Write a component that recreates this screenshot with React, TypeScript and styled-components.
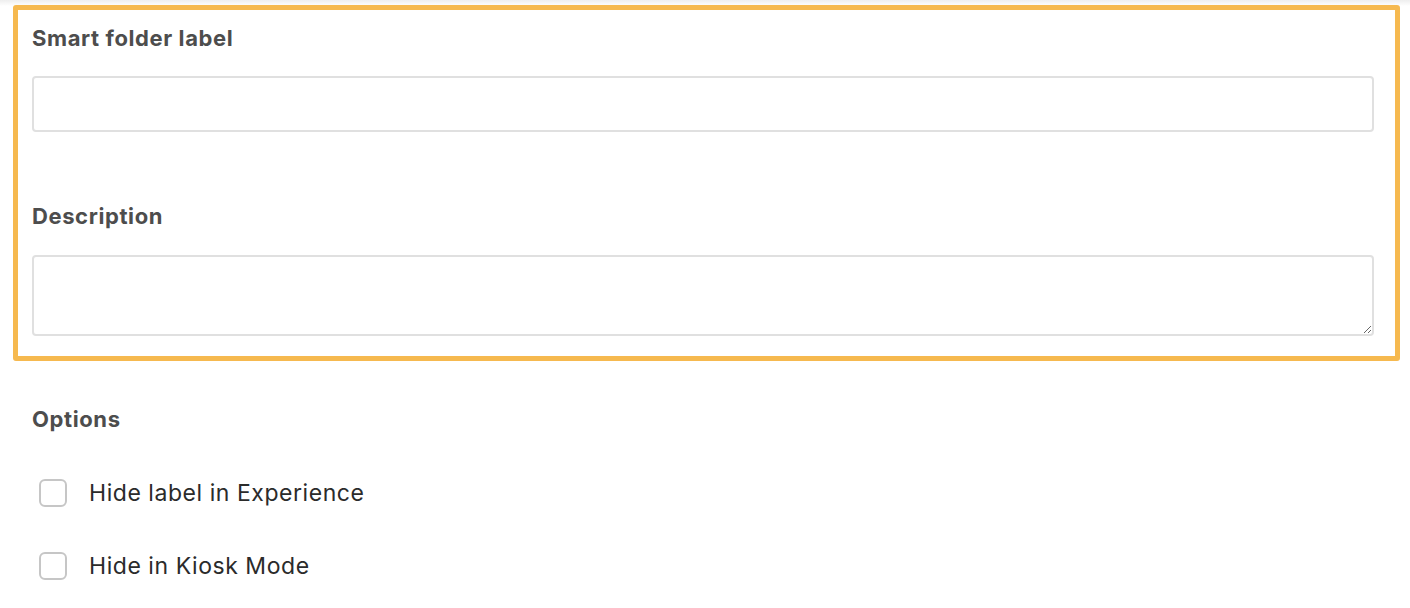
import React from "react";
import styled, { createGlobalStyle } from "styled-components";

const GlobalStyle = createGlobalStyle`
  html, body {
    margin: 0;
    padding: 0;
    background: linear-gradient(#eeeeee 0px, #ffffff 6px) no-repeat #ffffff;
    font-family: Inter, "Noto Sans", "Liberation Sans", sans-serif;
  }
`;

const Page = styled.div`
  width: 1410px;
  height: 608px;
  overflow: hidden;
  padding-top: 5px;
  box-sizing: border-box;
`;

const Highlight = styled.section`
  margin: 0 10px 0 13px;
  border: 5px solid #f6b94f;
  border-radius: 3px;
  padding: 14px 21px 20px 14px;
  display: flex;
  flex-direction: column;
`;

const FieldLabel = styled.label<{ $gap: number }>`
  display: block;
  font-size: 22px;
  line-height: 28px;
  font-weight: 700;
  color: #4d4d4d;
  letter-spacing: 0.6px;
  margin-bottom: ${({ $gap }) => $gap}px;
`;

const TextInput = styled.input`
  display: block;
  box-sizing: border-box;
  width: 100%;
  height: 56px;
  border: 2px solid #e0e0e0;
  border-radius: 4px;
  background: #fff;
  outline: none;
  font: inherit;
  margin-bottom: 70px;
`;

const TextArea = styled.textarea`
  display: block;
  box-sizing: border-box;
  width: 100%;
  height: 81px;
  border: 2px solid #e0e0e0;
  border-radius: 4px;
  background: #fff;
  outline: none;
  resize: vertical;
  font: inherit;
  margin: 0;
`;

const Options = styled.div`
  padding: 44px 0 0 32px;
  display: flex;
  flex-direction: column;
`;

const OptionList = styled.div`
  display: flex;
  flex-direction: column;
  gap: 45px;
  padding-left: 7px;
`;

const OptionRow = styled.label`
  display: flex;
  align-items: center;
  gap: 22px;
  height: 28px;
  cursor: pointer;
`;

const Box = styled.span`
  width: 28px;
  height: 28px;
  box-sizing: border-box;
  border: 2px solid #c6c6c6;
  border-radius: 6px;
  background: #fff;
  flex: none;
`;

const OptionText = styled.span`
  font-size: 23px;
  color: #2b2b2b;
  letter-spacing: 0.55px;
`;

const options = ["Hide label in Experience", "Hide in Kiosk Mode"];

export default function App() {
  return (
    <Page>
      <GlobalStyle />
      <Highlight>
        <FieldLabel $gap={24}>Smart folder label</FieldLabel>
        <TextInput type="text" />
        <FieldLabel $gap={25}>Description</FieldLabel>
        <TextArea />
      </Highlight>
      <Options>
        <FieldLabel $gap={46}>Options</FieldLabel>
        <OptionList>
          {options.map((o) => (
            <OptionRow key={o}>
              <Box />
              <OptionText>{o}</OptionText>
            </OptionRow>
          ))}
        </OptionList>
      </Options>
    </Page>
  );
}
